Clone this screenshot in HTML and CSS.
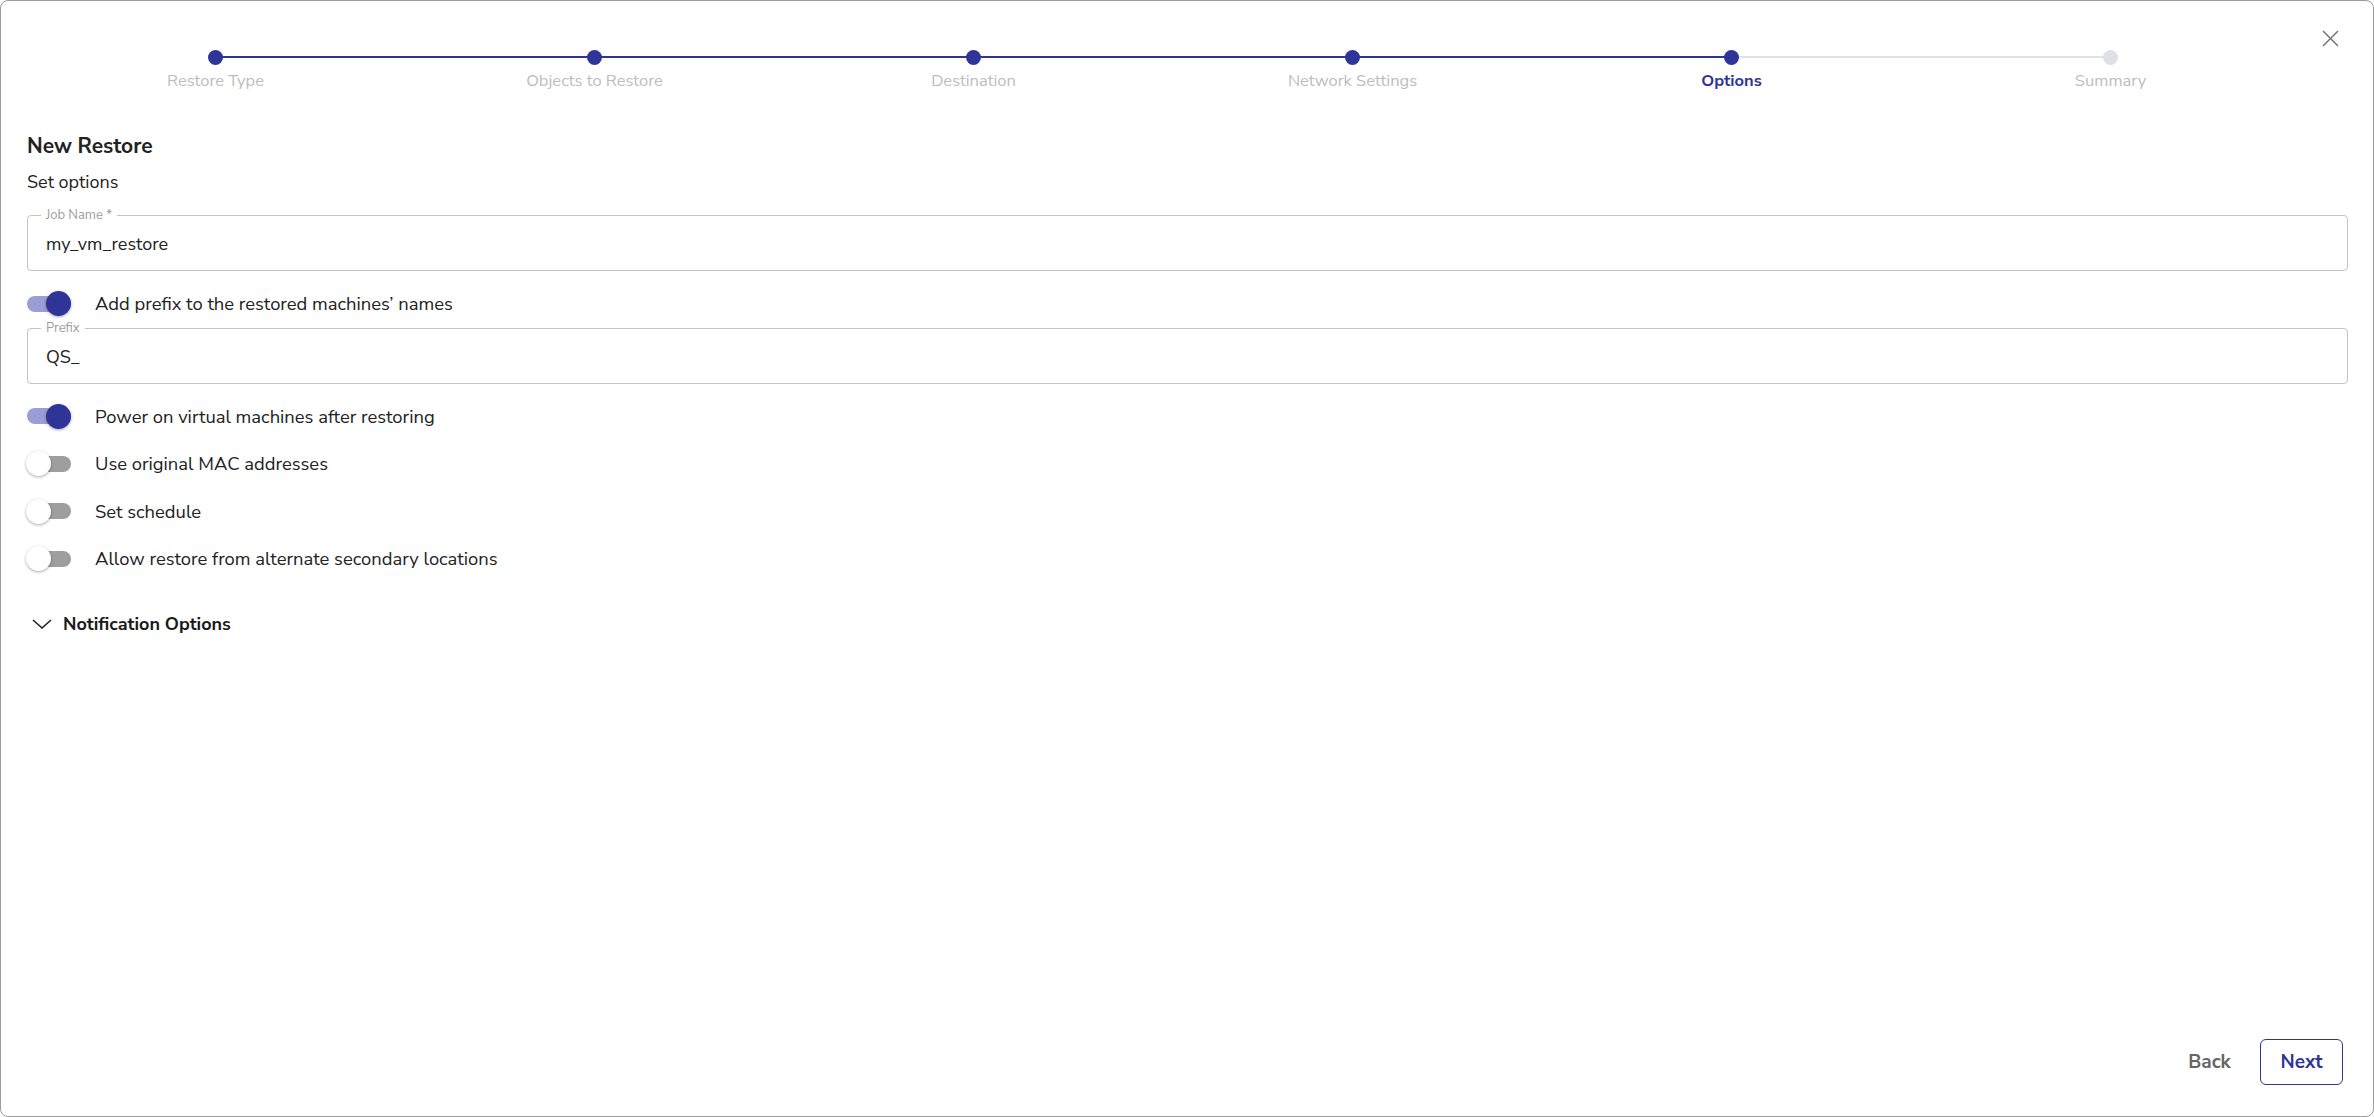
FILE: index.html
```html
<!DOCTYPE html>
<html lang="en">
<head>
    <meta charset="UTF-8">
    <title>New Restore</title>
    <link rel="stylesheet" href="styles.css">
</head>
<body>
    <div class="dialog">
        <button class="close-btn" aria-label="Close">
            <svg width="17" height="17" viewBox="0 0 17 17"><path d="M1 1L16 16M16 1L1 16" stroke="#767676" stroke-width="1.5" fill="none"/></svg>
        </button>

        <div class="stepper">
            <div class="step done"><span class="dot"></span><span class="step-label">Restore Type</span></div>
            <div class="step done"><span class="dot"></span><span class="step-label">Objects to Restore</span></div>
            <div class="step done"><span class="dot"></span><span class="step-label">Destination</span></div>
            <div class="step done"><span class="dot"></span><span class="step-label">Network Settings</span></div>
            <div class="step done active"><span class="dot"></span><span class="step-label">Options</span></div>
            <div class="step"><span class="dot"></span><span class="step-label">Summary</span></div>
        </div>

        <main class="content">
            <h2 class="title">New Restore</h2>
            <p class="subtitle">Set options</p>

            <div class="field">
                <span class="field-label">Job Name *</span>
                <span class="field-value">my_vm_restore</span>
            </div>

            <div class="toggle-row">
                <span class="switch on"><span class="thumb"></span></span>
                <span>Add prefix to the restored machines’ names</span>
            </div>

            <div class="field">
                <span class="field-label">Prefix</span>
                <span class="field-value">QS_</span>
            </div>

            <div class="toggle-row">
                <span class="switch on"><span class="thumb"></span></span>
                <span>Power on virtual machines after restoring</span>
            </div>
            <div class="toggle-row">
                <span class="switch"><span class="thumb"></span></span>
                <span>Use original MAC addresses</span>
            </div>
            <div class="toggle-row">
                <span class="switch"><span class="thumb"></span></span>
                <span>Set schedule</span>
            </div>
            <div class="toggle-row">
                <span class="switch"><span class="thumb"></span></span>
                <span>Allow restore from alternate secondary locations</span>
            </div>

            <div class="accordion">
                <svg width="22" height="12" viewBox="0 0 22 12"><path d="M2 2L11 10L20 2" stroke="#222" stroke-width="1.6" fill="none"/></svg>
                <span>Notification Options</span>
            </div>
        </main>

        <footer class="actions">
            <button class="btn-text">Back</button>
            <button class="btn-outline">Next</button>
        </footer>
    </div>
</body>
</html>
```
FILE: styles.css
```css
body {
    margin: 0;
    font-family: "Nunito Sans", Lato, sans-serif;
    color: #222;
    background: #fff;
}

.dialog {
    position: relative;
    height: 1117px;
    box-sizing: border-box;
    border: 1px solid #9c9c9c;
    border-radius: 8px;
    display: flex;
    flex-direction: column;
}

.close-btn {
    position: absolute;
    top: 29px;
    right: 34px;
    padding: 0;
    border: none;
    background: none;
    cursor: pointer;
}

/* stepper */
.stepper {
    display: flex;
    margin-left: 25px;
    padding-top: 49px;
}

.step {
    position: relative;
    width: 379px;
    display: flex;
    flex-direction: column;
    align-items: center;
}

.step + .step::before {
    content: "";
    position: absolute;
    top: 6px;
    left: -50%;
    right: 50%;
    height: 2px;
    background: #e0e1e6;
}

.step.done + .step.done::before {
    background: #2e3596;
}

.dot {
    position: relative;
    z-index: 1;
    width: 15px;
    height: 15px;
    border-radius: 50%;
    background: #dfe0e6;
}

.step.done .dot {
    background: #2e3596;
}

.step-label {
    margin-top: 6px;
    font-size: 16.5px;
    line-height: 20px;
    color: #bdbdbd;
}

.step.active .step-label {
    color: #2e3596;
    font-weight: bold;
}

/* content */
.content {
    flex: 1;
    padding: 41px 25px 0 26px;
}

.title {
    margin: 0;
    font-size: 21px;
    line-height: 28px;
    font-weight: bold;
}

.subtitle {
    margin: 9px 0 0;
    font-size: 18px;
    line-height: 26px;
}

.field {
    position: relative;
    height: 56px;
    box-sizing: border-box;
    border: 1px solid #c4c4c4;
    border-radius: 4px;
    padding: 0 18px;
    display: flex;
    align-items: center;
    margin-bottom: 9px;
}

.subtitle + .field {
    margin-top: 20px;
}

.field-label {
    position: absolute;
    top: -9px;
    left: 13px;
    padding: 0 5px;
    background: #fff;
    font-size: 13px;
    line-height: 16px;
    color: #9e9e9e;
}

.field-value {
    font-size: 18px;
    padding-top: 2px;
}

.toggle-row {
    height: 47.5px;
    display: flex;
    align-items: center;
    font-size: 18.4px;
}

.switch {
    position: relative;
    width: 44px;
    height: 16px;
    border-radius: 8px;
    background: #9e9e9e;
    margin-right: 24px;
}

.switch .thumb {
    position: absolute;
    top: -4.5px;
    left: -1px;
    width: 25px;
    height: 25px;
    border-radius: 50%;
    background: #fff;
    box-shadow: 0 1px 3px rgba(0, 0, 0, 0.35);
}

.switch.on {
    background: #9b9ed2;
}

.switch.on .thumb {
    left: 19px;
    background: #2e3596;
}

.accordion {
    margin-top: 17px;
    height: 48px;
    display: flex;
    align-items: center;
    gap: 10px;
    padding-left: 4px;
    font-size: 18px;
    font-weight: bold;
    color: #1a1a1a;
}

/* footer */
.actions {
    display: flex;
    justify-content: flex-end;
    gap: 9px;
    padding: 0 30px 31px 0;
}

.actions button {
    width: 83px;
    height: 46px;
    font-family: inherit;
    font-size: 19px;
    font-weight: bold;
    border-radius: 6px;
    cursor: pointer;
}

.btn-text {
    border: none;
    background: none;
    color: #666;
}

.btn-outline {
    border: 1.5px solid #2e3596;
    background: #fff;
    color: #2e3596;
}
```
